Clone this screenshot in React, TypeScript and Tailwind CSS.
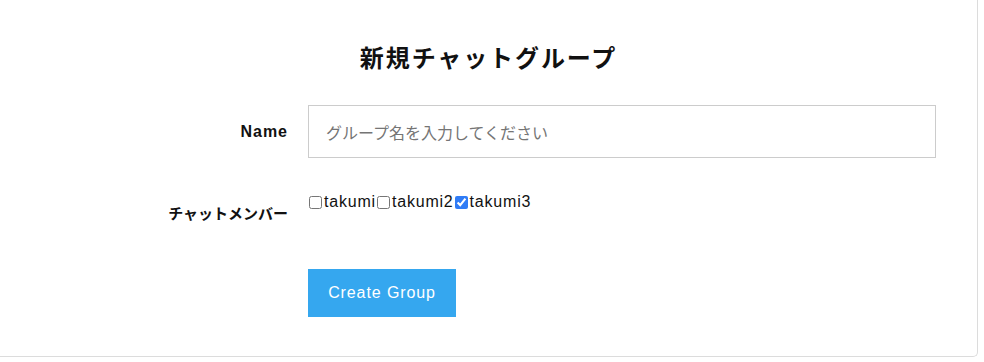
import { useState } from "react";

const users = ["takumi", "takumi2", "takumi3"];

export default function App() {
  const [checked, setChecked] = useState<Record<string, boolean>>({ takumi3: true });

  return (
    <div className="min-h-screen bg-white font-['Liberation_Sans','Noto_Sans_CJK_JP',sans-serif] text-[#111]">
      <div className="w-[978px] h-[357px] bg-white border-r border-b border-[#dcdcdc] rounded-br-[5px]">
        <h1 className="pt-[41px] text-center text-[24px] leading-[32px] font-bold tracking-[1.9px] font-['Noto_Sans_CJK_JP',sans-serif]">
          新規チャットグループ
        </h1>

        <div className="mt-[32px] grid grid-cols-[288px_628px] gap-x-[20px]">
          <label className="flex items-center justify-end h-[53px] text-[16px] font-bold tracking-[1px]">Name</label>
          <input
            type="text"
            placeholder="グループ名を入力してください"
            className="h-[53px] w-full border border-[#cccccc] px-[17px] text-[16px] outline-none placeholder:text-[#757575] font-['Noto_Sans_CJK_JP',sans-serif]"
          />

          <label className="mt-[32px] pt-[11px] text-right text-[15px] leading-[24px] font-bold font-['Noto_Sans_CJK_JP',sans-serif]">
            チャットメンバー
          </label>
          <div className="mt-[32px] flex items-center h-[24px] text-[16px] tracking-[0.8px]">
            {users.map((u) => (
              <label key={u} className="flex items-center">
                <input
                  type="checkbox"
                  checked={!!checked[u]}
                  onChange={(e) => setChecked({ ...checked, [u]: e.target.checked })}
                  className="m-0 mr-[2px] ml-[1px] w-[13px] h-[13px] accent-[#2f7cf6]"
                />
                <span>{u}</span>
              </label>
            ))}
          </div>

          <div />
          <div className="mt-[44px]">
            <button className="h-[48px] w-[148px] bg-[#35a7ef] text-white text-[16px] tracking-[0.9px]">Create Group</button>
          </div>
        </div>
      </div>
    </div>
  );
}
